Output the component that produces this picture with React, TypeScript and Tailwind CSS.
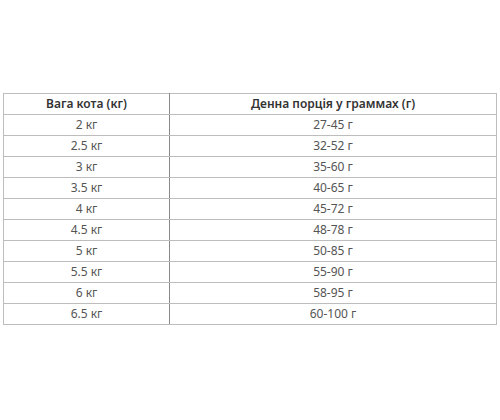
const rows: [string, string][] = [
  ["2 кг", "27-45 г"],
  ["2.5 кг", "32-52 г"],
  ["3 кг", "35-60 г"],
  ["3.5 кг", "40-65 г"],
  ["4 кг", "45-72 г"],
  ["4.5 кг", "48-78 г"],
  ["5 кг", "50-85 г"],
  ["5.5 кг", "55-90 г"],
  ["6 кг", "58-95 г"],
  ["6.5 кг", "60-100 г"],
];

export default function App() {
  return (
    <div className="w-[500px] h-[420px] bg-white pt-[93px] pl-[3px]" style={{ fontFamily: '"Noto Sans", sans-serif' }}>
      <table className="w-[494px] border-collapse text-[12px] leading-none">
        <thead>
          <tr className="h-[21px]">
            <th className="w-[166px] border border-[#bdbdbd] border-r-[#8a8a8a] font-semibold text-[#333]">Вага кота (кг)</th>
            <th className="border border-[#bdbdbd] font-semibold text-[#333]">Денна порція у граммах (г)</th>
          </tr>
        </thead>
        <tbody>
          {rows.map(([w, p]) => (
            <tr key={w} className="h-[21px]">
              <td className="border border-[#bdbdbd] border-r-[#8a8a8a] text-center text-[#555]">{w}</td>
              <td className="border border-[#bdbdbd] text-center text-[#555]">{p}</td>
            </tr>
          ))}
        </tbody>
      </table>
    </div>
  );
}
